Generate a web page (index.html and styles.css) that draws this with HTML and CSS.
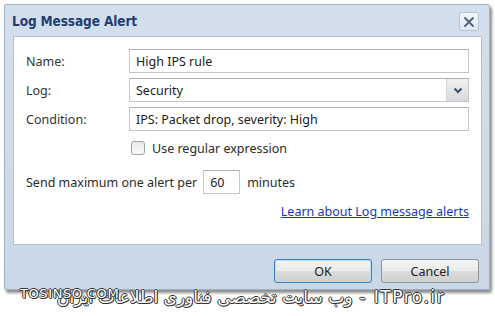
FILE: index.html
```html
<!DOCTYPE html>
<html lang="en">
<head>
    <meta charset="UTF-8">
    <title>Log Message Alert</title>
    <link rel="stylesheet" href="styles.css">
</head>
<body>
    <div class="window">
        <div class="titlebar">
            <div class="title">Log Message Alert</div>
            <div class="close">
                <svg width="12" height="12" viewBox="0 0 12 12"><path d="M2 2 L10 10 M10 2 L2 10" stroke="#4a5f86" stroke-width="1.8" stroke-linecap="round"/></svg>
            </div>
        </div>

        <div class="panel">
            <div class="field">
                <label class="label">Name:</label>
                <div class="input">High IPS rule</div>
            </div>
            <div class="field">
                <label class="label">Log:</label>
                <div class="input select">
                    <span class="select-value">Security</span>
                    <span class="select-btn">
                        <svg width="10" height="7" viewBox="0 0 10 7"><path d="M1.5 1.5 L5 5 L8.5 1.5" fill="none" stroke="#3d4f6a" stroke-width="2"/></svg>
                    </span>
                </div>
            </div>
            <div class="field">
                <label class="label">Condition:</label>
                <div class="input">IPS: Packet drop, severity: High</div>
            </div>
            <div class="check-row">
                <span class="checkbox"></span>
                <span>Use regular expression</span>
            </div>
            <div class="send-row">
                <span>Send maximum one alert per</span>
                <div class="input small">60</div>
                <span>minutes</span>
            </div>
            <div class="link-row">
                <a class="link">Learn about Log message alerts</a>
            </div>
        </div>

        <div class="footer">
            <button class="button default">OK</button>
            <button class="button">Cancel</button>
        </div>
    </div>

    <div class="mark mark-left">TOSINSO.COM</div>
    <div class="mark mark-right" dir="rtl">ITPro.ir - وب سایت تخصصی فناوری اطلاعات ایران</div>
</body>
</html>
```

FILE: styles.css
```css
* {
    margin: 0;
    padding: 0;
    box-sizing: border-box;
}

body {
    font-family: "Noto Sans", "Open Sans", sans-serif;
    font-size: 12.5px;
    color: #2b2b2b;
    background: #fff;
    width: 495px;
    height: 316px;
    position: relative;
    overflow: hidden;
}

.window {
    margin: 4px 0 0 4px;
    width: 486px;
    height: 286px;
    border: 1px solid #a3b1c4;
    border-radius: 2px;
    background: linear-gradient(#d3dfec, #cad7e6);
    box-shadow: 2px 3px 3px rgba(0, 0, 0, 0.45);
    display: flex;
    flex-direction: column;
}

.titlebar {
    height: 31px;
    display: flex;
    align-items: center;
    justify-content: space-between;
    padding: 0 10px 0 7px;
}

.title {
    font-family: "DejaVu Sans Condensed", "DejaVu Sans", sans-serif;
    font-weight: bold;
    font-size: 13.5px;
    color: #233f70;
    letter-spacing: -0.1px;
}

.close {
    width: 20px;
    height: 19px;
    margin-top: 2px;
    border: 1px solid #b7c4d6;
    border-radius: 2px;
    background: linear-gradient(#f3f6fa, #dfe6ef);
    display: flex;
    align-items: center;
    justify-content: center;
}

.panel {
    margin: 0 7px 0 8px;
    height: 209px;
    background: #fff;
    border: 1px solid #b5c2d3;
    padding: 12px 12px 0 12px;
}

.field {
    display: flex;
    align-items: center;
    margin-bottom: 5px;
}

.label {
    width: 103px;
    color: #333;
}

.input {
    flex: 1;
    height: 24px;
    border: 1px solid #c3c7cc;
    border-top-color: #abb0b6;
    padding: 0 6px;
    display: flex;
    align-items: center;
    color: #222;
    background: #fff;
}

.select {
    padding-right: 0;
    justify-content: space-between;
}

.select-btn {
    width: 22px;
    height: 22px;
    background: linear-gradient(#f2f2f2, #d6d8db);
    border-left: 1px solid #d0d3d7;
    display: flex;
    align-items: center;
    justify-content: center;
}

.check-row {
    display: flex;
    align-items: center;
    gap: 7px;
    margin: 9px 0 0 103px;
    height: 16px;
}

.checkbox {
    width: 14px;
    height: 14px;
    border: 1px solid #9aa1aa;
    border-radius: 3px;
    background: linear-gradient(#e9eaec, #fbfbfb);
    margin-left: 2px;
}

.send-row {
    display: flex;
    align-items: center;
    margin-top: 14px;
    gap: 6px;
}

.input.small {
    flex: none;
    width: 37px;
    margin-right: 1px;
}

.link-row {
    text-align: right;
    margin-top: 9px;
}

.link {
    color: #1f35b5;
    text-decoration: underline;
}

.footer {
    flex: 1;
    display: flex;
    justify-content: flex-end;
    align-items: center;
    gap: 9px;
    padding: 8px 10px 0 0;
}

.button {
    width: 98px;
    height: 24px;
    font-family: "Noto Sans", "Open Sans", sans-serif;
    font-size: 12.5px;
    color: #222;
    border: 1px solid #8f959c;
    border-radius: 3px;
    background: linear-gradient(#f4f4f4 0%, #ebebeb 50%, #dcdcdc 51%, #cfcfcf 100%);
}

.button.default {
    border-color: #3f7fc0;
    box-shadow: inset 0 0 0 1px #b9def4;
}

.mark {
    position: absolute;
    color: #fff;
    font-family: "DejaVu Sans", sans-serif;
    text-shadow: -1px 0 #333, 1px 0 #333, 0 -1px #333, 0 1px #333, 1px 1px #666;
    white-space: nowrap;
}

.mark-left {
    left: 20px;
    top: 286px;
    font-size: 13px;
    letter-spacing: 0.6px;
    z-index: 2;
}

.mark-right {
    right: 50px;
    top: 287px;
    font-size: 17px;
    letter-spacing: 1.5px;
    z-index: 1;
}
```
